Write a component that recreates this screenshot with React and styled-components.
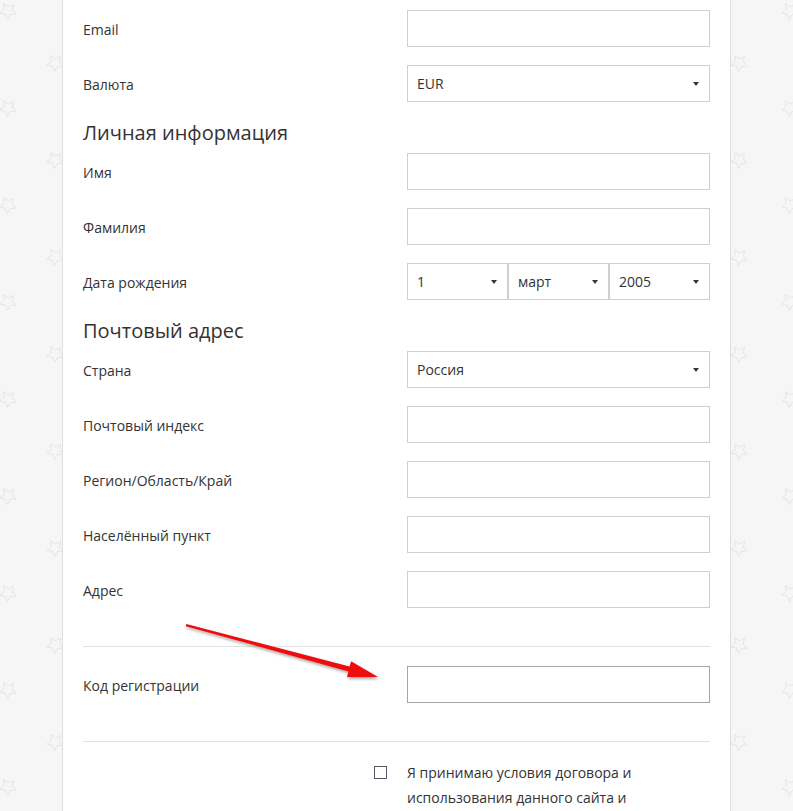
import React from 'react'
import styled, { createGlobalStyle } from 'styled-components'

const starPoints = (cx, cy, rot) => {
    const pts = []
    for (let i = 0; i < 10; i++) {
        const r = i % 2 === 0 ? 8.5 : 4.2
        const a = (rot + i * 36) * Math.PI / 180
        pts.push((cx + r * Math.sin(a)).toFixed(2) + ',' + (cy - r * Math.cos(a)).toFixed(2))
    }
    return pts.join(' ')
}

const tile = `<svg xmlns="http://www.w3.org/2000/svg" width="97.75" height="97" viewBox="0 0 97.75 97"><g fill="none" stroke="#e0e0e0" stroke-width="0.8"><polygon points="${starPoints(8, 11, 40)}"/><polygon points="${starPoints(55, 63, 40)}"/></g></svg>`

const GlobalStyle = createGlobalStyle`
    html, body {
        margin: 0;
        padding: 0;
    }
    body {
        min-height: 100vh;
        background-color: #f6f6f6;
        background-image: url("data:image/svg+xml,${encodeURIComponent(tile)}");
        background-size: 97.75px 97px;
        font-family: "Open Sans", "Liberation Sans", Arial, sans-serif;
        color: #333;
    }
`

const Card = styled.div`
    position: relative;
    box-sizing: border-box;
    width: 669px;
    min-height: 811px;
    margin: 0 auto;
    padding: 10px 20px 0;
    background: #fff;
    border-left: 1px solid #dedede;
    border-right: 1px solid #dedede;
`

const Row = styled.div`
    display: grid;
    grid-template-columns: 1fr 303px;
    column-gap: 20px;
    align-items: center;
    margin-bottom: 18px;
`

const Label = styled.div`
    padding-top: 3px;
    font-size: 14px;
    line-height: 20px;
    color: #333;
`

const Input = styled.div`
    box-sizing: border-box;
    height: 37px;
    background: #fff;
    border: 1px solid ${p => (p.$dark ? '#a6a6a6' : '#cfcfcf')};
`

const Select = styled.div`
    box-sizing: border-box;
    height: 37px;
    display: flex;
    align-items: center;
    justify-content: space-between;
    padding: 0 10px 0 9px;
    border: 1px solid #cfcfcf;
    background: #fff;
    font-size: 14px;
    color: #333;
`

const Caret = styled.span`
    width: 0;
    height: 0;
    border-left: 3.5px solid transparent;
    border-right: 3.5px solid transparent;
    border-top: 4px solid #3a3340;
`

const DateGroup = styled.div`
    display: grid;
    grid-template-columns: 101px 101px 101px;
`

const Heading = styled.h3`
    margin: 0 0 7px;
    font-size: 20px;
    line-height: 26px;
    font-weight: 400;
    color: #333;
`

const Divider = styled.hr`
    margin: 38px 0 ${p => p.$after || 19}px;
    border: 0;
    border-top: 1px solid #e2e2e2;
`

const TermsRow = styled.div`
    display: grid;
    grid-template-columns: 1fr 303px;
    column-gap: 20px;
`

const Checkbox = styled.span`
    justify-self: end;
    margin-top: 6px;
    width: 13px;
    height: 13px;
    box-sizing: border-box;
    border: 1px solid #5e5468;
    background: #fff;
`

const TermsText = styled.div`
    font-size: 14px;
    line-height: 25px;
    color: #333;
`

const ArrowSvg = styled.svg`
    position: absolute;
    left: 107px;
    top: 610px;
    width: 220px;
    height: 80px;
    overflow: visible;
`

const Field = ({ label, children }) => (
    <Row>
        <Label>{label}</Label>
        {children}
    </Row>
)

const SelectBox = ({ value }) => (
    <Select>
        <span>{value}</span>
        <Caret />
    </Select>
)

const Arrow = () => (
    <ArrowSvg viewBox="170 610 220 80">
        <defs>
            <filter id="shadow" x="-20%" y="-50%" width="140%" height="200%">
                <feDropShadow dx="1" dy="2" stdDeviation="1.6" floodColor="#000" floodOpacity="0.35" />
            </filter>
        </defs>
        <polygon
            filter="url(#shadow)"
            fill="#ee1111"
            points="186.3,624.0 349.6,666.6 351.1,661.3 378,677 347,677 348.4,671.4 185.7,626.2"
        />
    </ArrowSvg>
)

export default () => (
    <>
        <GlobalStyle />
        <Card>
            <Field label="Email"><Input /></Field>
            <Field label="Валюта"><SelectBox value="EUR" /></Field>

            <Heading>Личная информация</Heading>
            <Field label="Имя"><Input /></Field>
            <Field label="Фамилия"><Input /></Field>
            <Field label="Дата рождения">
                <DateGroup>
                    <SelectBox value="1" />
                    <SelectBox value="март" />
                    <SelectBox value="2005" />
                </DateGroup>
            </Field>

            <Heading>Почтовый адрес</Heading>
            <Field label="Страна"><SelectBox value="Россия" /></Field>
            <Field label="Почтовый индекс"><Input /></Field>
            <Field label="Регион/Область/Край"><Input /></Field>
            <Field label="Населённый пункт"><Input /></Field>
            <Field label="Адрес"><Input /></Field>

            <Divider />
            <Field label="Код регистрации"><Input $dark /></Field>
            <Divider $after={18} />

            <TermsRow>
                <Checkbox />
                <TermsText>Я принимаю условия договора и использования данного сайта и</TermsText>
            </TermsRow>
            <Arrow />
        </Card>
    </>
)
